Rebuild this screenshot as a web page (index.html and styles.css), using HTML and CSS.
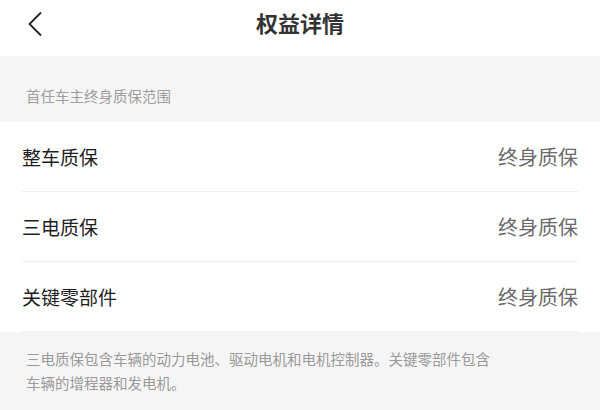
FILE: index.html
```html
<!DOCTYPE html>
<html lang="zh-CN">

<head>
    <meta charset="UTF-8">
    <meta name="viewport" content="width=device-width, initial-scale=1.0">
    <title>权益详情</title>
    <link rel="stylesheet" href="styles.css">
</head>

<body>
    <!-- Barra superior -->
    <header class="topbar">
        <a class="back" href="#">
            <svg width="16" height="26" viewBox="0 0 16 26">
                <path d="M14 1.5 L2.5 13 L14 24.5" fill="none" stroke="#222" stroke-width="1.8" />
            </svg>
        </a>
        <h1>权益详情</h1>
    </header>

    <div class="section-title">首任车主终身质保范围</div>

    <ul class="list">
        <li class="row">
            <span class="label">整车质保</span>
            <span class="value">终身质保</span>
        </li>
        <li class="row">
            <span class="label">三电质保</span>
            <span class="value">终身质保</span>
        </li>
        <li class="row">
            <span class="label">关键零部件</span>
            <span class="value">终身质保</span>
        </li>
    </ul>

    <!-- Nota de rodapé -->
    <p class="note">三电质保包含车辆的动力电池、驱动电机和电机控制器。关键零部件包含车辆的增程器和发电机。</p>
</body>

</html>
```

FILE: styles.css
```css
* {
    margin: 0;
    padding: 0;
    box-sizing: border-box;
}

body {
    font-family: "Noto Sans CJK SC", "Noto Sans", sans-serif;
    background: #f5f5f5;
    color: #222;
    width: 600px;
    height: 410px;
    overflow: hidden;
}

/* Topo */
.topbar {
    position: relative;
    height: 56px;
    background: #fff;
    display: flex;
    align-items: center;
    justify-content: center;
}

.back {
    position: absolute;
    left: 27px;
    top: 11px;
    display: block;
    width: 16px;
    height: 26px;
}

.back svg {
    display: block;
}

.topbar h1 {
    font-size: 22px;
    font-weight: 700;
    color: #333;
    line-height: 24px;
    margin-top: -12px;
}

/* Cabeçalho da seção */
.section-title {
    padding: 30px 26px 16px;
    font-size: 14.5px;
    line-height: 20px;
    color: #9e9e9e;
}

/* Lista */
.list {
    list-style: none;
    background: #fff;
    padding: 0 22px;
}

.row {
    height: 70px;
    border-bottom: 1px solid #eee;
    display: flex;
    align-items: center;
    justify-content: space-between;
    font-size: 19px;
    padding-bottom: 1px;
}

.label {
    color: #1e1e1e;
}

.value {
    color: #6b6b6b;
    font-size: 20px;
}

/* Nota */
.note {
    padding: 15px 26px 0;
    width: 524px;
    font-size: 14.5px;
    line-height: 24px;
    color: #9a9a9a;
}
```
